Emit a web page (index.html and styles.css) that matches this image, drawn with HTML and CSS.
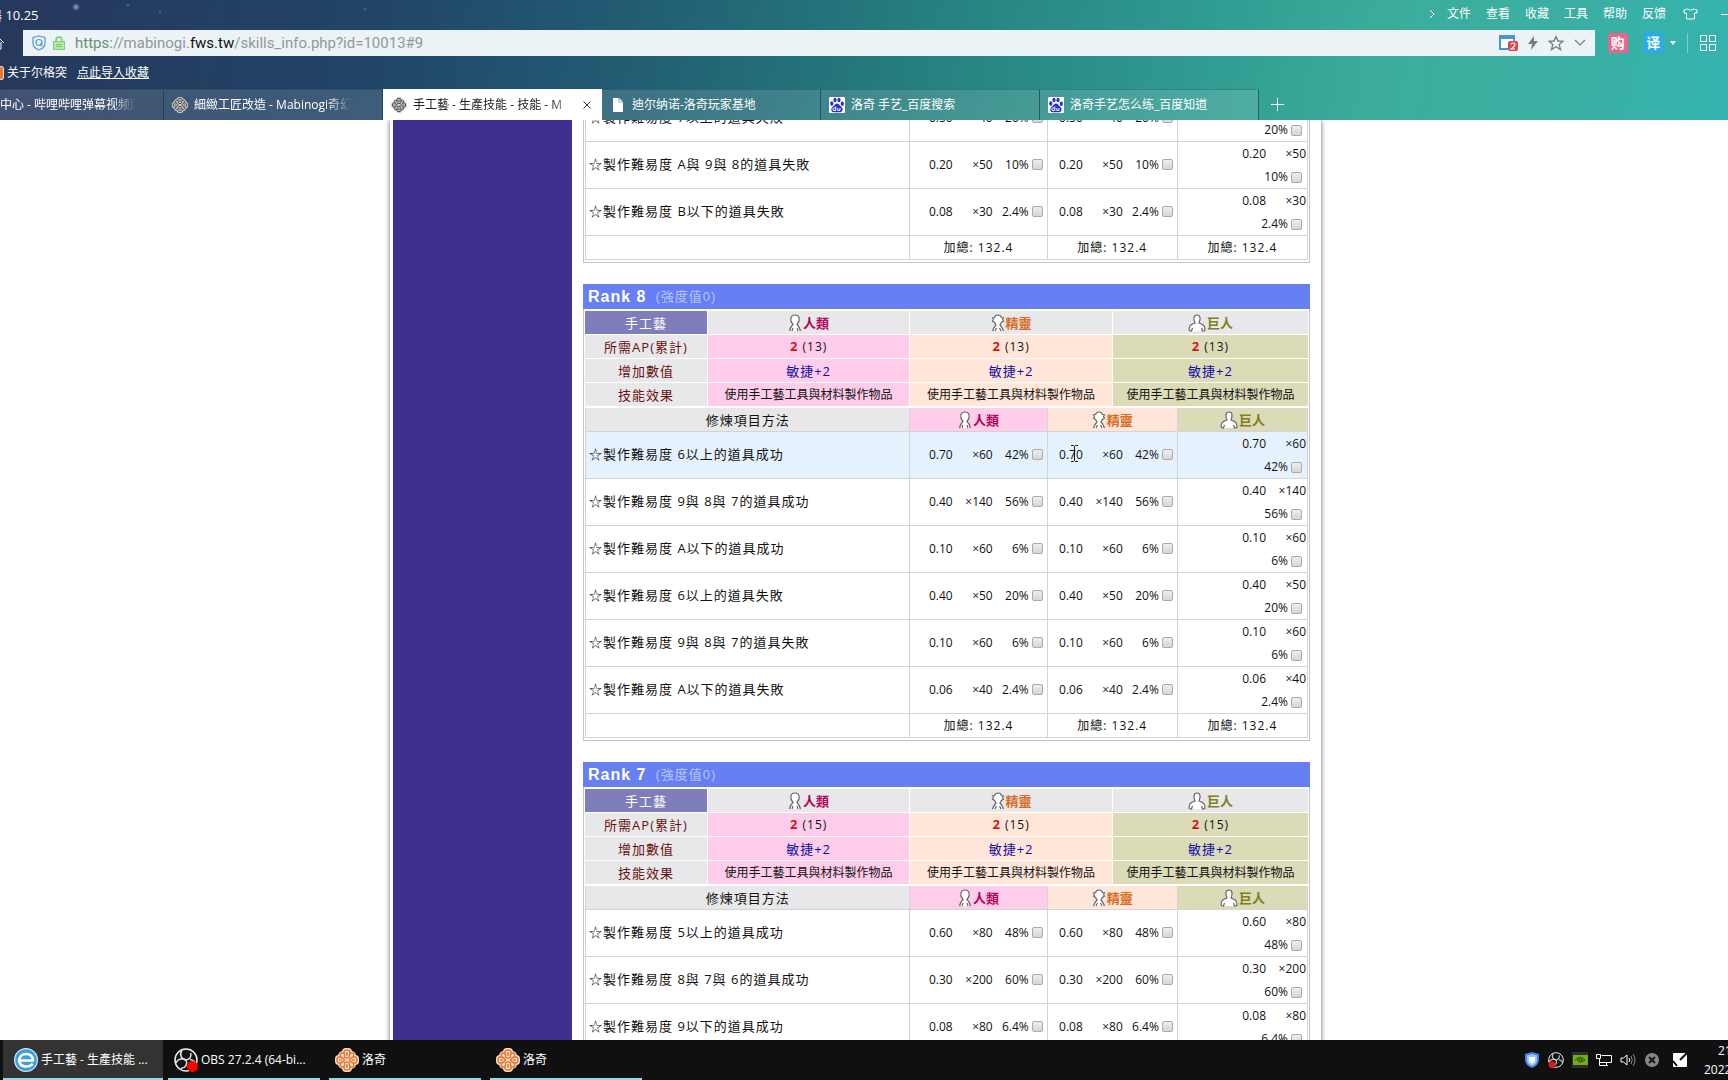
FILE: index.html
```html
<!DOCTYPE html>
<html lang="zh-Hant">
<head>
<meta charset="utf-8">
<title>手工藝 - 生產技能 - 技能 - Mabinogi</title>
<link rel="stylesheet" href="styles.css">
</head>
<body>
<svg class="defs" aria-hidden="true">
  <symbol id="human" viewBox="0 0 14 18"><path d="M2 17C2 13 3 11.500 5 10.500C3 8.500 2.500 7 2.800 4.500C3.200 2 4.800 1 7 1C9.200 1 10.800 2 11.200 4.500C11.500 7 11 8.500 9 10.500C11 11.500 12 13 12 17Z" fill="#fff"/><path d="M1.500 17C2.500 13 3 12 5 10.500C3 8.500 2.500 7 2.800 4.500C3.200 2 4.800 1 7 1C9.200 1 10.800 2 11.200 4.500C11.500 7 11 8.500 9 10.500C11 12 11.500 13 12.500 17M4 17L5 14M10 17L9 14" fill="none" stroke="#666" stroke-width="1.200"/></symbol>
  <symbol id="elf" viewBox="0 0 14 18"><path d="M2 17L5 11L2.500 8L1 5L3 3L7 1L11 3L13 5L11.500 8L9 11L12 17Z" fill="#fff"/><path d="M1.500 17C2.500 13.500 3.500 12.500 5 11L3.500 8.500L1.500 7L2.500 5.500L1.500 4L3.500 3.500C4 1.800 5.500 1 7 1C8.500 1 10 1.800 10.500 3.500L12.500 4L11.500 5.500L12.500 7L10.500 8.500L9 11C10.500 12.500 11.500 13.500 12.500 17M4 17L5.500 14M10 17L8.500 14" fill="none" stroke="#666" stroke-width="1.200"/></symbol>
  <symbol id="giant" viewBox="0 0 18 18"><path d="M1 17V13L6.500 9L6 3L9 1L12 3L11.500 9L17 13V17Z" fill="#fff"/><path d="M1 16.500C1 12 2 10.500 7 9C5.500 6 5 1 9 1C13 1 12.500 6 11 9C16 10.500 17 12 17 16.500L14.500 17L13.500 14M1 16.500L3.500 17L4.500 14" fill="none" stroke="#666" stroke-width="1.200"/></symbol>
  <symbol id="knot" viewBox="0 0 24 24"><g class="knot-base"><rect x="7" y="0" width="10" height="24" rx="4"/><rect x="0" y="7" width="24" height="10" rx="4"/><rect x="3" y="3" width="18" height="18" rx="5"/></g><g class="knot-line" fill="none"><path d="M9 6V4Q9 2 12 2Q15 2 15 4V6M9 18V20Q9 22 12 22Q15 22 15 20V18M6 9H4Q2 9 2 12Q2 15 4 15H6M18 9H20Q22 9 22 12Q22 15 20 15H18"/><path d="M6 9Q4 5 7 5Q10 5 9.500 8Q9 10 12 10Q15 10 14.500 8Q14 5 17 5Q20 5 18 9Q16 10 14.500 12Q16 14 18 15Q20 19 17 19Q14 19 14.500 16Q15 14 12 14Q9 14 9.500 16Q10 19 7 19Q4 19 6 15Q8 14 9.500 12Q8 10 6 9ZM12 4V8M12 16V20M4 12H7M17 12H20"/></g></symbol>
  <symbol id="paw" viewBox="0 0 16 16"><rect width="16" height="16" rx="1" fill="#fff"/><g fill="#2a2fd0"><ellipse cx="2.800" cy="6.500" rx="1.600" ry="2.200"/><ellipse cx="6" cy="3" rx="1.600" ry="2.300"/><ellipse cx="10" cy="3" rx="1.600" ry="2.300"/><ellipse cx="13.300" cy="6.700" rx="1.600" ry="2.200"/><path d="M8 6.500C10 6.500 11 9 13 10.500C14.500 13 13 15.500 11 15.200H5C2.500 15.500 1.500 13 3 10.500C5 9 6 6.500 8 6.500Z"/></g><path d="M6.800 9.500V13.500H5A1 1 0 0 1 5 11H6.800M8.800 11V13.500H11V11" fill="none" stroke="#fff"/></symbol>
  <symbol id="obs" viewBox="0 0 24 24"><circle cx="12" cy="12" r="11" fill="#111" stroke="#eee" stroke-width="1.500"/><g fill="none" stroke="#ddd" stroke-width="1.600"><path d="M8 2.500C5 6 7 11 12 12C16 11.500 18 8 16.500 5"/><path d="M12 12C14 16 11.500 20 7 20.500M12 12C7.500 9.500 3 11.500 2 15M16 11.500C19 12 21.500 14 21.500 16"/></g></symbol>
</svg>

<header class="browser">
  <div class="titlebar">
    <span class="version">器 10.25</span>
    <nav class="menu">
      <svg width="8" height="10" viewBox="0 0 8 10" class="line"><path d="M2 1L6 5L2 9"/></svg>
      <a href="#">文件</a><a href="#">查看</a><a href="#">收藏</a><a href="#">工具</a><a href="#">帮助</a><a href="#">反馈</a>
      <svg width="15" height="12" viewBox="0 0 15 12" class="line skin"><path d="M4.500 1Q7.500 3.500 10.500 1L14 2V5H11.500V11H3.500V5H1V2Z"/></svg>
      <svg class="line minimise" width="12" height="12" viewBox="0 0 12 12"><path d="M0 6.500H12"/></svg>
    </nav>
  </div>
  <div class="toolbar">
    <button class="home" aria-label="主页"><svg width="14" height="16" viewBox="0 0 14 16" class="line"><path d="M1 8L7 2L13 8M3 7V14H10V7"/></svg></button>
    <div class="address">
      <svg width="14" height="16" viewBox="0 0 14 16" fill="none" stroke="#4b9bd5" stroke-width="1.200"><path d="M7 1L13 2.500V8Q13 13 7 15Q1 13 1 8V2.500Z"/><circle cx="7" cy="7.500" r="3"/><path d="M8 8.500L10.500 11"/></svg>
      <svg width="12" height="14" viewBox="0 0 12 14"><path d="M3 6V4A3 3 0 0 1 9 4V6" fill="none" stroke="#7cc47a" stroke-width="1.400"/><rect x=".6" y="5.600" width="10.800" height="7.800" fill="#b4f0a4" stroke="#7cc47a"/><path d="M3 8.500H9M3 10.500H9" stroke="#7cc47a"/></svg>
      <div class="url"><span class="scheme">https:</span>//mabinogi.<b>fws.tw</b>/skills_info.php?id=10013#9</div>
      <div class="address-tools">
        <svg width="19" height="16" viewBox="0 0 19 16"><rect x="1" y="1" width="14" height="13" fill="#fff" stroke="#4597cf" stroke-width="2"/><path d="M0 2H16" stroke="#4597cf" stroke-width="4"/><rect x="9" y="6" width="10" height="10" rx="2" fill="#d94b4b"/><path d="M12 9.500Q12 8 14 8Q16 8 16 9.500Q16 11 12 14H16" fill="none" stroke="#fff" stroke-width="1.200"/></svg>
        <svg width="10" height="14" viewBox="0 0 10 14"><path d="M6 0L0 8H4L3 14L10 5H6Z" fill="#777c80"/></svg>
        <svg width="16" height="16" viewBox="0 0 16 16"><path d="M8 1.500L10 6L15 6.300L11.200 9.500L12.500 14.500L8 11.700L3.500 14.500L4.800 9.500L1 6.300L6 6Z" fill="none" stroke="#777c80" stroke-width="1.300"/></svg>
        <svg width="12" height="8" viewBox="0 0 12 8"><path d="M1 1L6 6L11 1" fill="none" stroke="#777c80" stroke-width="1.200"/></svg>
      </div>
    </div>
    <div class="extensions">
      <button class="ext buy">购</button>
      <button class="ext translate">译</button>
      <svg width="6" height="4" viewBox="0 0 6 4"><path d="M0 0H6L3 4Z" fill="#fff"/></svg>
      <span class="divider"></span>
      <svg width="16" height="16" viewBox="0 0 16 16" class="line"><path d="M.5.500H6.500V6.500H.5ZM9.500.500H15.500V6.500H9.500ZM.5 9.500H6.500V15.500H.5ZM9.500 9.500H15.500V15.500H9.500Z"/></svg>
    </div>
  </div>
  <div class="bookmarks"><i class="bookmark-icon"></i><a href="#">关于尔格突</a><a class="import" href="#">点此导入收藏</a></div>
  <div class="tabs">
    <div class="tab first"><span class="tab-title">中心 - 哔哩哔哩弹幕视频网</span></div>
    <div class="tab"><svg class="favicon grey"><use href="#knot"/></svg><span class="tab-title faded">細緻工匠改造 - Mabinogi奇幻</span></div>
    <div class="tab active"><svg class="favicon grey"><use href="#knot"/></svg><span class="tab-title">手工藝 - 生產技能 - 技能 - M</span><button class="close" aria-label="关闭"><svg width="8" height="8" viewBox="0 0 8 8"><path d="M.5.500L7.500 7.500M7.500.500L.5 7.500" stroke="#333"/></svg></button></div>
    <div class="tab"><svg class="favicon" viewBox="0 0 16 16"><path d="M3 1H9L13 5V15H3Z" fill="#fff"/><path d="M9 1V5H13" fill="none" stroke="#8aa"/></svg><span class="tab-title">迪尔纳诺-洛奇玩家基地</span></div>
    <div class="tab"><svg class="favicon"><use href="#paw"/></svg><span class="tab-title">洛奇 手艺_百度搜索</span></div>
    <div class="tab"><svg class="favicon"><use href="#paw"/></svg><span class="tab-title">洛奇手艺怎么练_百度知道</span></div>
    <button class="new-tab" aria-label="新标签页"><svg width="13" height="13" viewBox="0 0 13 13" class="line"><path d="M6.500 0V13M0 6.500H13"/></svg></button>
  </div>
</header>

<main class="viewport">
  <div class="page">
    <aside class="sidebar"></aside>
    <div class="ranks" id="ranks"></div>
  </div>
</main>

<footer class="taskbar">
  <button class="task current"><svg width="24" height="24" viewBox="0 0 24 24"><circle cx="12" cy="12" r="12" fill="#d4ecfa"/><circle cx="12" cy="12" r="10.800" fill="#3d9fe0"/><path d="M5 12.500H19Q19 6 12 6Q6 6 5 12.500Q6 18.500 12 18.500Q17 18.500 18.500 15.500" fill="none" stroke="#fff" stroke-width="2.600"/></svg><span>手工藝 - 生產技能 ...</span></button>
  <button class="task"><svg width="24" height="24" viewBox="0 0 24 24"><use href="#obs"/><circle cx="18.500" cy="18.500" r="5.500" fill="#f00"/></svg><span>OBS 27.2.4 (64-bi...</span></button>
  <button class="task"><svg width="24" height="24" class="orange"><use href="#knot"/></svg><span>洛奇</span></button>
  <button class="task"><svg width="24" height="24" class="orange"><use href="#knot"/></svg><span>洛奇</span></button>
  <div class="tray">
    <svg width="16" height="16" viewBox="0 0 16 16"><path d="M8 0L15 2V8Q15 13 8 16Q1 13 1 8V2Z" fill="#3f86e0"/><path d="M8 2L13 3.500V8Q13 12 8 14Q3 12 3 8V3.500Z" fill="#9cc6f6"/><path d="M5 5H11V8Q11 10.500 8 12Q5 10.500 5 8Z" fill="#fff"/></svg>
    <svg width="16" height="16" viewBox="0 0 24 24"><use href="#obs"/><circle cx="6" cy="19" r="5" fill="#e01818"/></svg>
    <svg width="16" height="16" viewBox="0 0 16 16"><rect width="16" height="16" fill="#2c3036"/><rect x="1" y="3" width="15" height="10" fill="#6fae12"/><path d="M3 8Q8 3 13 8Q8 12 5 8Q8 5.500 10.500 8Q8 10 7 8" fill="none" stroke="#2e4a0c"/></svg>
    <svg width="16" height="16" viewBox="0 0 16 16" class="line"><path d="M5.500 3.500H15.500V10.500H4M3.500 7V13.500H12M10.500 10.500V13.500M.5 2.500H4.500V6.500H.5Z"/></svg>
    <svg width="16" height="16" viewBox="0 0 16 16" class="line"><path d="M1 6H3.500L7 3V13L3.500 10H1Z"/><path d="M9 6Q10.500 8 9 10"/><path d="M11 4Q13.500 8 11 12M13 2Q17 8 13 14" stroke-opacity=".5"/></svg>
    <svg width="16" height="16" viewBox="0 0 16 16"><circle cx="8" cy="8" r="7" fill="#888"/><path d="M5 5L11 11M11 5L5 11" stroke="#171717" stroke-width="2"/></svg>
    <svg class="pen" width="16" height="16" viewBox="0 0 16 16"><rect x="1" y="1" width="14" height="14" rx="1" fill="#fff"/><path d="M1 9L5 14M8 8L15 1" stroke="#111" stroke-width="2"/></svg>
    <div class="clock"><span class="time">21</span><span>2022</span></div>
  </div>
</footer>
<script src="ranks.js"></script>
</body>
</html>
```
FILE: styles.css
```css
* { box-sizing: border-box; }
body {
  margin: 0;
  height: 100vh;
  display: flex;
  flex-direction: column;
  overflow: hidden;
  background: #fff;
  color: #111;
  font: 12px/16px "Open Sans", "Noto Sans CJK SC", sans-serif;
}
button { border: 0; padding: 0; background: none; color: inherit; font: inherit; }
a { color: inherit; text-decoration: none; }
svg { flex: none; display: block; }
.defs { position: absolute; width: 0; height: 0; }
.line { fill: none; stroke: #fff; }

/* browser window */
.browser {
  flex: none;
  color: #fff;
  background:
    radial-gradient(circle at 76px 7px, rgba(200, 220, 240, .7) 0, transparent 4px),
    radial-gradient(circle at 128px 5px, rgba(200, 220, 240, .3) 0, transparent 2px),
    radial-gradient(circle at 160px 12px, rgba(200, 220, 240, .3) 0, transparent 2px),
    radial-gradient(circle at 365px 9px, rgba(200, 220, 240, .3) 0, transparent 2px),
    linear-gradient(100deg, #26385c 0%, #214467 21%, #225a72 35%, #237079 46%, #278582 56%, #2f9990 68%, #3cad9d 80%, #3aafa2 90%, #35b3b0 100%);
}
.titlebar { height: 30px; display: flex; justify-content: space-between; overflow: hidden; }
.version { margin-left: -11px; padding-top: 7px; font-size: 13px; }
.menu { display: flex; align-items: center; gap: 15px; height: 27px; }
.menu svg:first-child { margin-right: -4px; }
.skin { margin-left: 2px; }
.minimise { margin: 0 -5px 0 8px; }
.toolbar { height: 26px; display: flex; }
.home { width: 23px; display: flex; align-items: center; overflow: hidden; justify-content: flex-end; padding-right: 18px; }
.address { flex: 1; display: flex; align-items: center; padding: 0 9px; gap: 7px; background: #ecf3f6; color: #929699; }
.url { flex: 1; padding-left: 3px; font: 15px/24px Roboto, sans-serif; }
.url b { font-weight: 400; color: #111; }
.scheme { color: #6b8f76; }
.address-tools { display: flex; align-items: center; gap: 10px; }
.extensions { width: 133px; display: flex; align-items: center; padding: 0 12px 0 13px; }
.ext { width: 20px; height: 20px; border-radius: 2px; font-size: 14px; font-weight: 700; line-height: 20px; }
.buy { background: #e4688a; }
.translate { background: #29a9ef; margin: 0 7px 0 16px; }
.divider { width: 1px; height: 20px; margin: 0 12px 0 11px; background: #7fd0c8; }
.bookmarks { height: 33px; display: flex; align-items: center; gap: 10px; }
.bookmarks .import { text-decoration: underline; }
.bookmark-icon { width: 4px; height: 14px; margin-right: -7px; background: #e57a35; border: 1px solid #f3d9c8; border-left: 0; border-radius: 0 3px 3px 0; }
.tabs { display: flex; height: 31px; }
.tab { width: 219px; display: flex; align-items: center; gap: 6px; padding: 0 10px 0 8px; background: rgba(255, 255, 255, .13); border-right: 1px solid rgba(10, 50, 70, .6); border-top: 1px solid rgba(10, 50, 70, .3); }
.tab.first { width: 164px; padding: 0 28px 0 0; }
.tab.active { background: #fff; color: #222; border-color: #fff; }
.tab-title { flex: 1; overflow: hidden; white-space: nowrap; }
.first .tab-title, .faded, .active .tab-title { -webkit-mask-image: linear-gradient(90deg, #000 84%, transparent); mask-image: linear-gradient(90deg, #000 84%, transparent); }
.faded { margin-right: 20px; }
.favicon { width: 16px; height: 16px; }
.grey { --knot-fill: #d4d4d4; --knot-stroke: #4a4a4a; }
.orange { --knot-fill: #fbe3cd; --knot-stroke: #ea7430; }
.knot-base { fill: var(--knot-fill); }
.knot-line { stroke: var(--knot-stroke); stroke-width: 1.5; }
.close { width: 8px; height: 8px; }
.new-tab { width: 36px; display: grid; place-items: center; }

/* site page */
.viewport { flex: 1; min-height: 0; overflow: hidden; padding-right: 17px; font-family: "Open Sans", "Noto Sans CJK TC", sans-serif; }
.page { display: flex; gap: 11px; width: min(931px, 100%); min-height: 100%; margin: 0 auto; padding: 0 11px 0 3px; box-shadow: 0 0 5px #666; }
.sidebar { width: 179px; flex: none; background: #402e91; }
.ranks { flex: 1; min-width: 0; display: flex; flex-direction: column; gap: 21px; margin-top: -25px; }
.rank-title { display: flex; align-items: center; gap: 9px; height: 25px; margin: 0; padding: 0 5px; background: #6680f4; color: #fff; font: bold 16px/25px "Liberation Sans", "Noto Sans CJK TC", sans-serif; letter-spacing: 1px; }
.rank-title small { font-size: 13px; font-weight: 400; color: #b9c5fb; }
.rank-body { display: flex; flex-direction: column; gap: 2px; border: 1px solid #c4c4c4; border-top: 0; padding: 2px 1px; }
.rank-body.scrolled { padding-top: 0; }
table { width: 100%; table-layout: fixed; border-collapse: separate; border-spacing: 0; }
th, td { padding: 0; text-align: center; font-weight: 400; }
.info th, .info td { height: 24px; border-right: 1px solid #fff; border-bottom: 1px solid #fff; background-clip: padding-box; line-height: 20px; }
.info tr > :last-child { border-right: 0; }
.info tbody tr:last-child > * { border-bottom: 0; height: 23px; }
.info thead th { background-color: #e8e8ea; }
.info thead th:first-child { background-color: #7e7eba; color: #fff; }
.info th { font-size: 13px; letter-spacing: 1px; }
.info tbody th { background-color: #e8e8ea; color: #6b1010; }
.info .human, .training th.human { background-color: #ffccea; }
.info .elf, .training th.elf { background-color: #ffe6d8; }
.info .giant, .training th.giant { background-color: #dcdbb8; }
.ap b { color: #d41414; font-size: 13px; }
.ap, .total { letter-spacing: 1px; }
.stat { color: #0c0ca8; font-size: 13px; letter-spacing: 1px; }
.race { display: inline-flex; align-items: center; gap: 1px; height: 20px; vertical-align: top; font-size: 13px; font-weight: 700; letter-spacing: 0; }
.r-human { color: #b8005c; }
.r-elf { color: #d96a1e; }
.r-giant { color: #808020; }
.training th, .training td { border-right: 1px solid #d4d4d4; border-bottom: 1px solid #d4d4d4; }
.training tr > :first-child { border-left: 1px solid #d4d4d4; }
.training th { height: 24px; line-height: 20px; background-color: #e8e8ea; font-size: 13px; letter-spacing: 1px; }
.training tbody td { height: 47px; padding-bottom: 2px; }
.training tbody td:last-child { padding-bottom: 0; }
.training tbody td:first-child { padding-left: 3px; text-align: left; font-size: 13px; letter-spacing: 1px; }
.training tfoot td { height: 24px; }
.training .hovered { background: #e6f1fe; }
.goal { position: relative; display: flex; align-items: center; justify-content: flex-end; padding-right: 4px; line-height: 23px; }
.goal > span { display: flex; align-items: center; }
.count { width: 40px; text-align: right; }
.percent { width: 36px; text-align: right; }
.goal input { appearance: none; width: 11px; height: 11px; margin: 1px 0 0 3px; border: 1px solid #aaa; border-radius: 2px; background: linear-gradient(#eee, #d6d6d6); }
.goal.stacked { flex-direction: column; align-items: flex-end; padding-right: 1px; }
.stacked .done { padding-right: 4px; }
.text-cursor { position: absolute; left: 22px; top: 2px; }

/* taskbar */
.taskbar { flex: none; height: 40px; display: flex; padding-left: 3px; background: #101010; color: #fff; }
.task { position: relative; width: 161px; display: flex; align-items: center; gap: 3px; padding-left: 11px; white-space: nowrap; }
.task::after { content: ""; position: absolute; left: 5px; right: 4px; bottom: 0; height: 2px; background: #9bd8dd; }
.task.current { width: 160px; background: #333; }
.task.current::after { left: 0; right: 0; }
.tray { display: flex; align-items: center; gap: 8px; margin-left: auto; }
.pen { margin-left: 4px; }
.clock { width: 24px; margin-left: 8px; display: flex; flex-direction: column; overflow: hidden; line-height: 19px; }
.time { padding-left: 14px; }
```
FILE: ranks.js
```js
const races = [["human", "人類", 14], ["elf", "精靈", 14], ["giant", "巨人", 18]];

const race = ([id, name, width]) =>
  `<span class="race r-${id}"><svg width="${width}" height="18"><use href="#${id}"/></svg>${name}</span>`;

const textCursor = `<svg class="text-cursor" width="9" height="17" viewBox="0 0 9 17"><path d="M1 .5H3.500L4.500 1.500L5.500 .5H8M4.500 1.500V15.500M1 16.500H3.500L4.500 15.500L5.500 16.500H8" fill="none" stroke="#111"/></svg>`;

const goal = ([label, rate, count, percent], col, hovered) =>
  `<td><div class="goal${col === 2 ? " stacked" : ""}"><span>${rate}<span class="count">×${count}</span></span>` +
  `<span class="done"><span class="percent">${percent}%</span><input type="checkbox" aria-label="${label} ${races[col][1]}"></span>` +
  `${hovered && col === 1 ? textCursor : ""}</div></td>`;

const training = (rows, head, hoverRow) => `
  <table class="training">
    <colgroup><col style="width:45%"><col style="width:19%"><col style="width:18%"><col style="width:18%"></colgroup>
    ${head ? `<thead><tr><th>修煉項目方法</th>${races.map(r => `<th class="${r[0]}">${race(r)}</th>`).join("")}</tr></thead>` : ""}
    <tbody>${rows.map((row, i) => `<tr class="${i === hoverRow ? "hovered" : ""}"><td>☆製作難易度 ${row[0]}</td>${[0, 1, 2].map(c => goal(row, c, i === hoverRow)).join("")}</tr>`).join("")}</tbody>
    <tfoot><tr><td></td>${"<td class=\"total\">加總: 132.4</td>".repeat(3)}</tr></tfoot>
  </table>`;

const line = (label, cls, html) =>
  `<tr><th>${label}</th>${races.map(r => `<td class="${cls} ${r[0]}">${html}</td>`).join("")}</tr>`;

const rank = (n, ap, rows, hoverRow) => `
  <section>
    <h2 class="rank-title">Rank ${n} <small>(強度值0)</small></h2>
    <div class="rank-body">
      <table class="info">
        <colgroup><col style="width:17%"><col style="width:28%"><col style="width:28%"><col style="width:27%"></colgroup>
        <thead><tr><th>手工藝</th>${races.map(r => `<th>${race(r)}</th>`).join("")}</tr></thead>
        <tbody>${line("所需AP(累計)", "ap", `<b>2</b> (${ap})`)}${line("增加數值", "stat", "敏捷+2")}${line("技能效果", "effect", "使用手工藝工具與材料製作物品")}</tbody>
      </table>
      ${training(rows, true, hoverRow)}
    </div>
  </section>`;

document.getElementById("ranks").innerHTML =
  `<section><div class="rank-body scrolled">${training([
    ["7以上的道具失敗", "0.50", 40, 20],
    ["A與 9與 8的道具失敗", "0.20", 50, 10],
    ["B以下的道具失敗", "0.08", 30, 2.4]
  ], false)}</div></section>` +
  rank(8, 13, [
    ["6以上的道具成功", "0.70", 60, 42],
    ["9與 8與 7的道具成功", "0.40", 140, 56],
    ["A以下的道具成功", "0.10", 60, 6],
    ["6以上的道具失敗", "0.40", 50, 20],
    ["9與 8與 7的道具失敗", "0.10", 60, 6],
    ["A以下的道具失敗", "0.06", 40, 2.4]
  ], 0) +
  rank(7, 15, [
    ["5以上的道具成功", "0.60", 80, 48],
    ["8與 7與 6的道具成功", "0.30", 200, 60],
    ["9以下的道具成功", "0.08", 80, 6.4]
  ]);
```
